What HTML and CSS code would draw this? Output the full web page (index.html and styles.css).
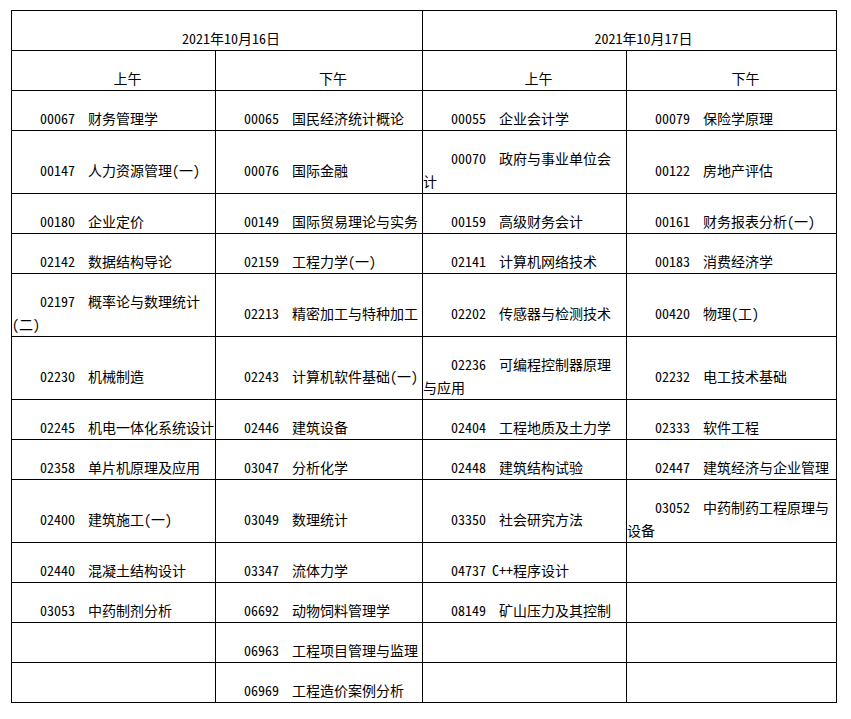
FILE: index.html
```html
<!DOCTYPE html>
<html lang="zh-CN">
<head>
<meta charset="utf-8">
<title>考试安排</title>
<link rel="stylesheet" href="styles.css">
</head>
<body>
<table class="sched">
  <colgroup>
    <col class="c1"><col class="c2"><col class="c3"><col class="c4">
  </colgroup>
  <tr class="hd">
    <td colspan="2">2021年10月16日</td>
    <td colspan="2">2021年10月17日</td>
  </tr>
  <tr class="hd">
    <td>上午</td><td>下午</td><td>上午</td><td>下午</td>
  </tr>
  <tr>
    <td>00067<span class="sp"></span>财务管理学</td>
    <td>00065<span class="sp"></span>国民经济统计概论</td>
    <td>00055<span class="sp"></span>企业会计学</td>
    <td>00079<span class="sp"></span>保险学原理</td>
  </tr>
  <tr>
    <td>00147<span class="sp"></span>人力资源管理(一)</td>
    <td>00076<span class="sp"></span>国际金融</td>
    <td>00070<span class="sp"></span>政府与事业单位会<br>计</td>
    <td>00122<span class="sp"></span>房地产评估</td>
  </tr>
  <tr>
    <td>00180<span class="sp"></span>企业定价</td>
    <td>00149<span class="sp"></span>国际贸易理论与实务</td>
    <td>00159<span class="sp"></span>高级财务会计</td>
    <td>00161<span class="sp"></span>财务报表分析(一)</td>
  </tr>
  <tr>
    <td>02142<span class="sp"></span>数据结构导论</td>
    <td>02159<span class="sp"></span>工程力学(一)</td>
    <td>02141<span class="sp"></span>计算机网络技术</td>
    <td>00183<span class="sp"></span>消费经济学</td>
  </tr>
  <tr>
    <td>02197<span class="sp"></span>概率论与数理统计<br>(二)</td>
    <td>02213<span class="sp"></span>精密加工与特种加工</td>
    <td>02202<span class="sp"></span>传感器与检测技术</td>
    <td>00420<span class="sp"></span>物理(工)</td>
  </tr>
  <tr>
    <td>02230<span class="sp"></span>机械制造</td>
    <td>02243<span class="sp"></span>计算机软件基础(一)</td>
    <td>02236<span class="sp"></span>可编程控制器原理<br>与应用</td>
    <td>02232<span class="sp"></span>电工技术基础</td>
  </tr>
  <tr>
    <td>02245<span class="sp"></span>机电一体化系统设计</td>
    <td>02446<span class="sp"></span>建筑设备</td>
    <td>02404<span class="sp"></span>工程地质及土力学</td>
    <td>02333<span class="sp"></span>软件工程</td>
  </tr>
  <tr>
    <td>02358<span class="sp"></span>单片机原理及应用</td>
    <td>03047<span class="sp"></span>分析化学</td>
    <td>02448<span class="sp"></span>建筑结构试验</td>
    <td>02447<span class="sp"></span>建筑经济与企业管理</td>
  </tr>
  <tr>
    <td>02400<span class="sp"></span>建筑施工(一)</td>
    <td>03049<span class="sp"></span>数理统计</td>
    <td>03350<span class="sp"></span>社会研究方法</td>
    <td>03052<span class="sp"></span>中药制药工程原理与<br>设备</td>
  </tr>
  <tr>
    <td>02440<span class="sp"></span>混凝土结构设计</td>
    <td>03347<span class="sp"></span>流体力学</td>
    <td>04737<span class="sp1"></span>C++程序设计</td>
    <td></td>
  </tr>
  <tr>
    <td>03053<span class="sp"></span>中药制剂分析</td>
    <td>06692<span class="sp"></span>动物饲料管理学</td>
    <td>08149<span class="sp"></span>矿山压力及其控制</td>
    <td></td>
  </tr>
  <tr>
    <td></td>
    <td>06963<span class="sp"></span>工程项目管理与监理</td>
    <td></td>
    <td></td>
  </tr>
  <tr>
    <td></td>
    <td>06969<span class="sp"></span>工程造价案例分析</td>
    <td></td>
    <td></td>
  </tr>
</table>
</body>
</html>
```
FILE: styles.css
```css
html, body {
  margin: 0;
  padding: 0;
  background: #ffffff;
}
body {
  color: #000000;
  font-family: "Noto Sans CJK SC", "Noto Sans", sans-serif;
  font-size: 14px;
  font-feature-settings: "hwid" 1;
}
.sched {
  margin: 10px 0 0 11px;
  border-collapse: collapse;
  table-layout: fixed;
  width: 826px;
}
.c1 { width: 204px; }
.c2 { width: 207px; }
.c3 { width: 204px; }
.c4 { width: 210px; }
.sched td {
  border: 1px solid #000000;
  padding: 16px 0 0 0;
  line-height: 23px;
  vertical-align: middle;
  text-indent: 28px;
  text-align: left;
  white-space: nowrap;
  overflow: hidden;
}
.sched tr.hd td {
  text-align: center;
}
.sp {
  display: inline-block;
  width: 13px;
}
.sp1 {
  display: inline-block;
  width: 6px;
}
```
